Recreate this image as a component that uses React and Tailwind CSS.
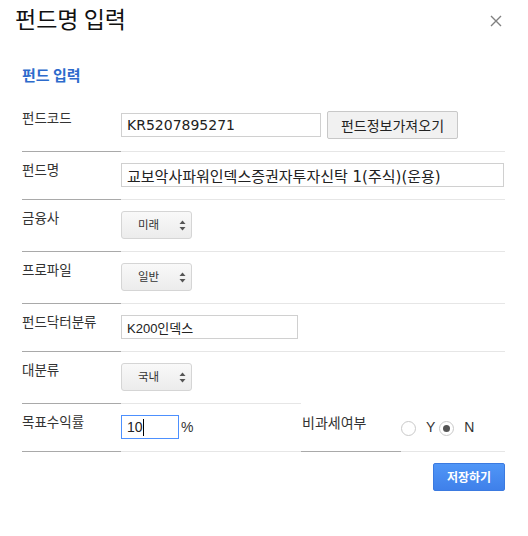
import React from 'react';

const KR = "font-['Noto_Sans_CJK_KR',sans-serif]";

// 라벨 + 값 한 줄
const Row = ({ label, children, valueClass = 'flex-1' }) => (
    <div className="flex">
        <div className="w-[99px] shrink-0 border-b border-[#a9a9a9] pt-[11px] pb-[12px] text-[13.5px] leading-none text-[#333]">
            {label}
        </div>
        <div className={`${valueClass} border-b border-[#e6e6e6] pt-[11px] pb-[12px] flex items-center gap-[6px]`}>
            {children}
        </div>
    </div>
);

const SelectBox = ({ value }) => (
    <div className="relative w-[71px] h-[28px] rounded-[3px] border border-[#d5d5d5] bg-linear-to-b from-[#f9f9f9] to-[#ececec] flex items-center pl-[16px] text-[11.5px] leading-none text-[#333]">
        {value}
        <svg className="absolute right-[5px] top-[8px]" width="7" height="11" viewBox="0 0 7 11">
            <path d="M3.5 0.5 L6.5 4 L0.5 4 Z" fill="#555" />
            <path d="M3.5 10.5 L6.5 7 L0.5 7 Z" fill="#555" />
        </svg>
    </div>
);

const Radio = ({ checked }) => (
    <span className="w-[15px] h-[15px] mt-[3px] rounded-full border border-[#c9c9c9] bg-white flex items-center justify-center">
        {checked && <span className="w-[7px] h-[7px] rounded-full bg-[#555]" />}
    </span>
);

const App = () => {
    return (
        <div className={`${KR} w-[528px] h-[536px] bg-white`}>
            {/* 헤더 */}
            <div className="flex justify-between items-start pl-[15px] pr-[26px] pt-[7px]">
                <h1 className="text-[23px] leading-none font-normal text-[#111]">펀드명 입력</h1>
                <svg className="mt-[8px]" width="12" height="12" viewBox="0 0 12 12">
                    <path d="M1 1 L11 11 M11 1 L1 11" stroke="#808080" strokeWidth="1.4" />
                </svg>
            </div>

            <div className="mt-[37px] pl-[22px] text-[15px] font-bold leading-none text-[#2d6bcc]">펀드 입력</div>

            <div className="mt-[18px] ml-[22px] w-[483px]">
                <Row label="펀드코드">
                    <input
                        readOnly
                        value="KR5207895271"
                        className="w-[200px] h-[24px] border border-[#d0d0d0] px-[5px] text-[14px] text-[#222] font-['DejaVu_Sans','Noto_Sans_CJK_KR',sans-serif] outline-none"
                    />
                    <button className="w-[131px] h-[28px] rounded-[2px] border border-[#c8c8c8] bg-[#f1f1f1] text-[14px] leading-none text-[#222]">
                        펀드정보가져오기
                    </button>
                </Row>

                <Row label="펀드명">
                    <input
                        readOnly
                        value="교보악사파워인덱스증권자투자신탁 1(주식)(운용)"
                        className="w-[383px] h-[24px] border border-[#d0d0d0] px-[5px] text-[15px] text-[#222] font-['DejaVu_Sans','Noto_Sans_CJK_KR',sans-serif] outline-none"
                    />
                </Row>

                <Row label="금융사">
                    <SelectBox value="미래" />
                </Row>

                <Row label="프로파일">
                    <SelectBox value="일반" />
                </Row>

                <Row label="펀드닥터분류">
                    <input
                        readOnly
                        value="K200인덱스"
                        className="w-[177px] h-[24px] border border-[#d0d0d0] px-[5px] text-[13px] text-[#222] font-['Liberation_Sans','Noto_Sans_CJK_KR',sans-serif] outline-none"
                    />
                </Row>

                <Row label="대분류" valueClass="w-[180px]">
                    <SelectBox value="국내" />
                </Row>

                {/* 목표수익률 / 비과세여부 */}
                <div className="flex">
                    <div className="w-[99px] shrink-0 border-b border-[#a9a9a9] pt-[11px] pb-[12px] text-[13.5px] leading-none text-[#333]">
                        목표수익률
                    </div>
                    <div className="w-[180px] border-b border-[#e6e6e6] pt-[11px] pb-[12px] flex items-center">
                        <div className="w-[58px] h-[24px] border border-[#4d90fe] pl-[5px] flex items-center text-[14px] text-[#222] font-['Liberation_Sans',sans-serif]">
                            10<span className="w-px h-[17px] bg-black" />
                        </div>
                        <span className="ml-[2px] text-[14px] text-[#333] font-['Liberation_Sans',sans-serif]">%</span>
                    </div>
                    <div className="w-[100px] border-b border-[#a9a9a9] pt-[11px] pb-[12px] pl-[1px] text-[14px] leading-none text-[#333]">
                        비과세여부
                    </div>
                    <div className="flex-1 border-b border-[#e6e6e6] pt-[11px] pb-[12px] flex items-center h-[48px] text-[14px] text-[#333] font-['Liberation_Sans',sans-serif]">
                        <Radio />
                        <span className="ml-[10px]">Y</span>
                        <span className="ml-[4px] flex"><Radio checked /></span>
                        <span className="ml-[10px]">N</span>
                    </div>
                </div>

                <div className="mt-[11px] flex justify-end">
                    <button className="w-[72px] h-[28px] rounded-[2px] border border-[#3b7ae0] bg-linear-to-b from-[#5096f7] to-[#3f80ea] text-white text-[12px] font-bold leading-none">
                        저장하기
                    </button>
                </div>
            </div>
        </div>
    );
};

export default App;
